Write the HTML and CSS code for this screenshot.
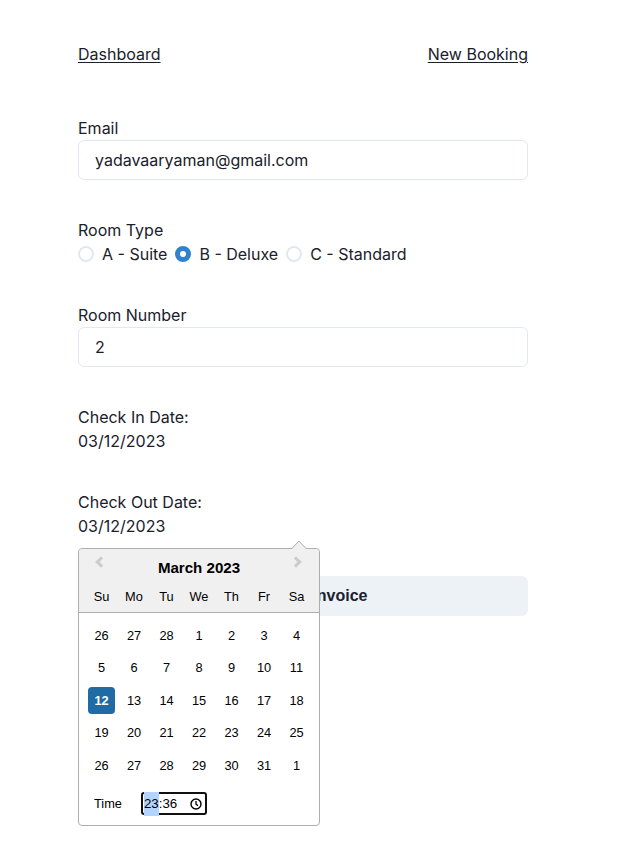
FILE: index.html
```html
<!DOCTYPE html>
<html lang="en">
<head>
<meta charset="utf-8">
<title>New Booking</title>
<link rel="stylesheet" href="styles.css">
</head>
<body>
<div class="page">
  <nav class="nav">
    <a href="#" class="nav-link">Dashboard</a>
    <a href="#" class="nav-link">New Booking</a>
  </nav>

  <form class="form">
    <div class="field field-input">
      <label class="label">Email</label>
      <div class="input">yadavaaryaman@gmail.com</div>
    </div>

    <div class="field">
      <label class="label">Room Type</label>
      <div class="radios">
        <span class="radio"><span class="dot"></span><span class="radio-text">A - Suite</span></span>
        <span class="radio checked"><span class="dot"></span><span class="radio-text">B - Deluxe</span></span>
        <span class="radio"><span class="dot"></span><span class="radio-text">C - Standard</span></span>
      </div>
    </div>

    <div class="field field-input">
      <label class="label">Room Number</label>
      <div class="input">2</div>
    </div>

    <div class="field">
      <label class="label">Check In Date:</label>
      <div class="date">03/12/2023</div>
    </div>

    <div class="field">
      <label class="label">Check Out Date:</label>
      <div class="date date-anchor">03/12/2023
        <div class="picker">
          <svg class="triangle" width="18" height="10" viewBox="0 0 18 10"><path d="M0.5 10 L9 1 L17.5 10" fill="#f0f0f0" stroke="#aeaeae" stroke-width="1"/></svg>
          <div class="picker-header">
            <span class="nav-arrow prev"></span>
            <span class="nav-arrow next"></span>
            <div class="month-title">March 2023</div>
            <div class="week-row day-names">
              <span>Su</span><span>Mo</span><span>Tu</span><span>We</span><span>Th</span><span>Fr</span><span>Sa</span>
            </div>
          </div>
          <div class="month">
            <div class="week-row"><span>26</span><span>27</span><span>28</span><span>1</span><span>2</span><span>3</span><span>4</span></div>
            <div class="week-row"><span>5</span><span>6</span><span>7</span><span>8</span><span>9</span><span>10</span><span>11</span></div>
            <div class="week-row"><span class="selected">12</span><span>13</span><span>14</span><span>15</span><span>16</span><span>17</span><span>18</span></div>
            <div class="week-row"><span>19</span><span>20</span><span>21</span><span>22</span><span>23</span><span>24</span><span>25</span></div>
            <div class="week-row"><span>26</span><span>27</span><span>28</span><span>29</span><span>30</span><span>31</span><span>1</span></div>
          </div>
          <div class="time-row">
            <span class="time-caption">Time</span>
            <span class="time-input"><span class="hh">23</span>:36
              <svg class="clock" width="12" height="12" viewBox="0 0 12 12"><circle cx="6" cy="6" r="5" fill="none" stroke="#000" stroke-width="1.4"/><path d="M6 3 V6.2 L8 7.6" fill="none" stroke="#000" stroke-width="1.3"/></svg>
            </span>
          </div>
        </div>
      </div>
    </div>

    <button type="button" class="btn">Generate Invoice</button>
  </form>
</div>
</body>
</html>
```

FILE: styles.css
```css
* { box-sizing: border-box; }
html, body { margin: 0; padding: 0; background: #fff; }
body {
  font-family: Inter, "Liberation Sans", sans-serif;
  font-size: 16px;
  line-height: 24px;
  color: #1A202C;
  min-height: 847px;
}
.page {
  width: 450px;
  margin-left: 78px;
  padding-top: 42px;
  min-height: 847px;
}
.nav {
  display: flex;
  justify-content: space-between;
}
.nav-link {
  color: #1A202C;
  text-decoration: underline;
  text-underline-offset: 2px;
}
.form {
  display: flex;
  flex-direction: column;
  margin-top: 50px;
}
.field { margin-bottom: 37px; display: flex; flex-direction: column; }
.field-input { margin-bottom: 38px; }
.label { display: block; height: 24px; }
.input {
  height: 40px;
  border: 1px solid #E2E8F0;
  border-radius: 6px;
  padding: 0 16px;
  line-height: 38px;
}
.radios { display: flex; align-items: center; height: 24px; gap: 8px; }
.radio { display: flex; align-items: center; }
.dot {
  width: 16px; height: 16px;
  border: 2px solid #E2E8F0;
  border-radius: 50%;
  position: relative;
}
.radio.checked .dot { background: #3182CE; border-color: #3182CE; }
.radio.checked .dot::after {
  content: "";
  position: absolute;
  left: 3px; top: 3px;
  width: 6px; height: 6px;
  background: #fff;
  border-radius: 50%;
}
.radio-text { margin-left: 8px; }
.date { height: 24px; }
.date-anchor { position: relative; }
.btn {
  height: 40px;
  border: none;
  border-radius: 6px;
  background: #EDF2F7;
  color: #1A202C;
  font-family: "Liberation Sans", Arial, sans-serif;
  font-weight: 700;
  font-size: 16px;
  width: 100%;
  margin-top: 1px;
}

/* datepicker overlay */
.picker {
  position: absolute;
  left: 0;
  top: calc(100% + 10px);
  width: 242px;
  background: #fff;
  border: 1px solid #aeaeae;
  border-radius: 4px;
  font-family: "Liberation Sans", Arial, sans-serif;
  font-size: 12.8px;
  color: #000;
  z-index: 5;
}
.triangle { position: absolute; top: -9px; left: 211px; }
.picker-header {
  background: #f0f0f0;
  border-bottom: 1px solid #aeaeae;
  border-top-left-radius: 4px;
  border-top-right-radius: 4px;
  padding-top: 8px;
  text-align: center;
  position: relative;
  height: 64px;
}
.month-title {
  font-weight: 700;
  font-size: 15.1px;
  line-height: 18px;
  margin-top: 2px;
}
.nav-arrow {
  position: absolute;
  top: 9px;
  width: 8px; height: 8px;
  border-style: solid;
  border-color: #ccc;
  border-width: 3px 3px 0 0;
}
.nav-arrow.prev { left: 18px; transform: rotate(-135deg); }
.nav-arrow.next { left: 213px; transform: rotate(45deg); }
.week-row {
  display: grid;
  grid-template-columns: repeat(7, 32.5px);
  justify-content: center;
  height: 32.5px;
  align-items: center;
  justify-items: center;
  line-height: 27px;
}
.week-row span { width: 27px; height: 27px; text-align: center; border-radius: 4px; }
.day-names { height: 29px; margin-top: 5px; }
.month { padding: 6px 0 4px 0; }
.week-row .selected { background: #216ba5; color: #fff; font-weight: 700; }
.time-row {
  display: flex;
  align-items: center;
  padding: 6px 0 9px 15px;
}
.time-caption { font-size: 12.8px; }
.time-input {
  margin-left: 19px;
  width: 66px;
  height: 23px;
  border: 2px solid #101010;
  border-radius: 3px;
  display: flex;
  align-items: center;
  padding-left: 1px;
  font-size: 13.3px;
  position: relative;
}
.hh { background: #b3d4fc; }
.clock { position: absolute; right: 3px; top: 4px; }
```
